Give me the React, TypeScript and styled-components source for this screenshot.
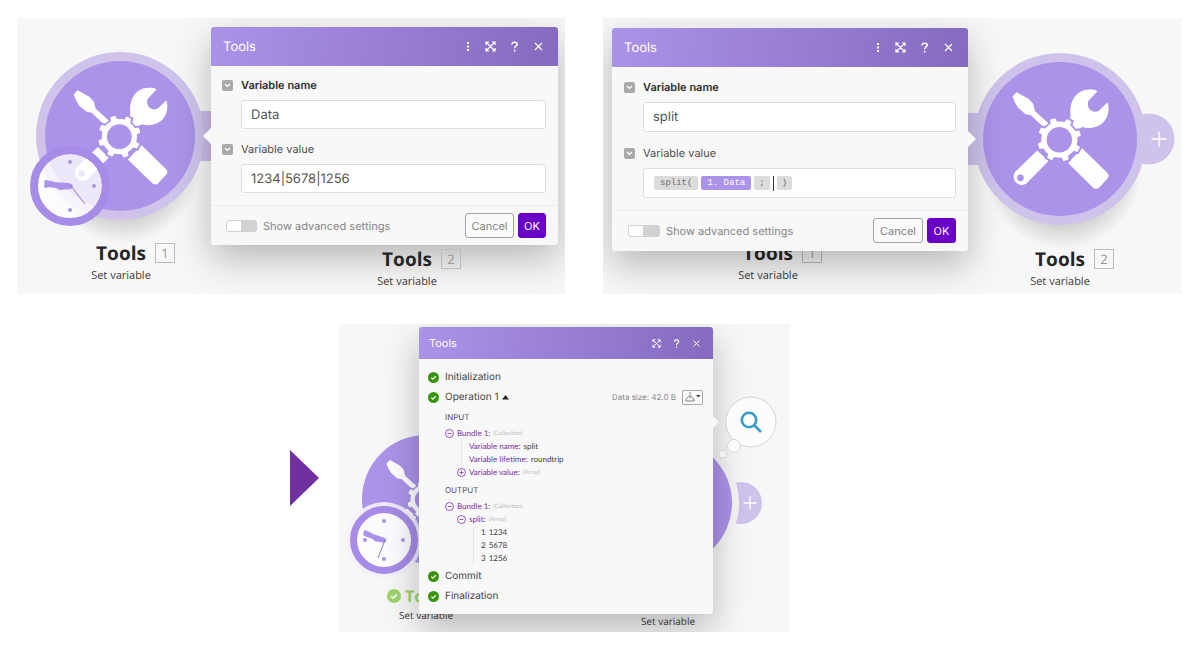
import React, { useId } from "react";
import styled, { createGlobalStyle, css } from "styled-components";

const ui = `Inter, "Liberation Sans", sans-serif`;
const segoe = `"Open Sans", "Noto Sans", sans-serif`;
const violet = "#ab93e9";

const GlobalStyle = createGlobalStyle`
  * { box-sizing: border-box; }
  body { margin: 0; background: #fff; font-family: ${ui}; color: #4a4a4a; text-rendering: geometricPrecision; }
  button, input { font: inherit; color: inherit; margin: 0; text-rendering: inherit; }
  svg { display: block; }
`;

/* ---------- page ---------- */

const Page = styled.main`
  display: flex;
  flex-direction: column;
  gap: 30px;
  padding: 18px 18px 14px 17px;
`;

const TopRow = styled.div`
  display: flex;
  gap: 38px;
`;

const BottomRow = styled.div`
  display: flex;
  align-items: center;
  gap: 20px;
  padding-left: 273px;
`;

const Scene = styled.section<{ $grow?: number; $basis?: number; $height: number }>`
  position: relative;
  overflow: hidden;
  flex: ${(p) => (p.$grow ? `${p.$grow} 1 0` : `0 1 ${p.$basis}px`)};
  min-width: 0;
  min-height: ${(p) => p.$height}px;
  background: #f7f7f7;
`;

/* ---------- modules on the canvas ---------- */

const Art = styled.svg<{ $x: number; $y: number }>`
  position: absolute;
  left: ${(p) => p.$x}px;
  top: ${(p) => p.$y}px;
  width: 1px;
  height: 1px;
  overflow: visible;
`;

const Caption = styled.div<{ $x: number; $y: number; $small?: boolean }>`
  position: absolute;
  left: ${(p) => p.$x - 70}px;
  top: ${(p) => p.$y}px;
  width: 140px;
  display: grid;
  grid-template-columns: 1fr auto 1fr;
  align-items: center;
  column-gap: ${(p) => (p.$small ? 4 : 9)}px;
  row-gap: ${(p) => (p.$small ? 2 : 4)}px;
  font-family: ${segoe};
`;

const CaptionTitle = styled.strong<{ $small?: boolean; $done?: boolean }>`
  grid-column: 2;
  font-size: ${(p) => (p.$small ? 16 : 19)}px;
  line-height: ${(p) => (p.$small ? 18 : 22)}px;
  color: ${(p) => (p.$done ? "#9dd36b" : "#252525")};
`;

const CaptionNumber = styled.span<{ $small?: boolean }>`
  justify-self: start;
  width: 20px;
  height: ${(p) => (p.$small ? 18 : 20)}px;
  border: 1px solid #bcbcbc;
  color: #999;
  font-size: ${(p) => (p.$small ? 11 : 13)}px;
  line-height: 18px;
  text-align: center;
`;

const CaptionText = styled.span<{ $small?: boolean }>`
  grid-column: 1 / -1;
  font-size: ${(p) => (p.$small ? 10 : 11)}px;
  line-height: 16px;
  color: #3a3a3a;
  text-align: center;
`;

const CaptionMark = styled.span`
  grid-column: 1;
  justify-self: end;
`;

function ToolsGlyph({ radius, back = violet }: { radius: number; back?: string }) {
  const teeth = [0, 1, 2, 3, 4, 5, 6, 7].map((k) => -108 + 45 * k + 90);
  return (
    <g transform={`scale(${radius / 230})`} fill="#fff">
      <path d="M-130-140-142-127Q-136-108-125-93L-104-75-87-71-46-32-32-45-75-84-80-105-94-120Z" />
      <path d="M22-46 32-70C26-110 48-148 88-148 98-148 106-147 112-143L84-113Q80-95 93-85 104-78 117-85L142-110C150-88 144-52 112-38Q90-29 66-36L46-22Z" />
      <path d="M-68 34-134 98A25 25 0 0 0-101 134L-34 66Z" />
      <path d="M66 28 141 101Q149 109 142 118L117 145Q109 152 100 146L24 72Z" />
      <circle cx="-118" cy="116" r="10" fill={back} />
      <g transform="translate(-2 2)">
        <circle r="54" fill={back} stroke={back} strokeWidth="10" />
        {teeth.map((a) => (
          <path key={a} d="M-11-48-8-65H8L11-48Z" transform={`rotate(${a})`} stroke={back} strokeWidth="12" />
        ))}
        <circle r="54" />
        {teeth.map((a) => (
          <path key={a} d="M-11-48-8-65H8L11-48Z" transform={`rotate(${a})`} />
        ))}
        <circle r="38" fill={back} />
      </g>
    </g>
  );
}

function GroundShadow({ radius }: { radius: number }) {
  const id = useId();
  return (
    <>
      <radialGradient id={id}>
        <stop offset="0.6" stopColor="#000" stopOpacity="0.2" />
        <stop offset="1" stopColor="#000" stopOpacity="0" />
      </radialGradient>
      <circle cx="3" cy={radius * 0.36} r={radius * 0.92} fill={`url(#${id})`} />
    </>
  );
}

interface ClockProps {
  x: number;
  y: number;
  r: number;
  ring: number;
  tilt?: number;
  thin: [number, number];
}

function Clock({ x, y, r, ring, tilt = 0, thin }: ClockProps) {
  const d = r - 8;
  return (
    <g transform={`translate(${x} ${y})`}>
      <circle r={r} fill="#fff" fillOpacity="0.78" />
      <circle r={r + ring / 2} fill="none" stroke="#a68ce6" strokeWidth={ring} />
      <g fill={violet}>
        <circle cy={-d} r="2" />
        <circle cx={d} r="2" />
        <circle cy={d} r="2" />
        <circle cx={-d} r="2" />
        <path
          d="M2-2Q4 1 1 3L-10 4-14 2-24 1Q-27-2-25-6L-18-5-16-4-2-3Z"
          transform={`rotate(${tilt}) scale(${r / 32})`}
        />
      </g>
      <path d={`M1 0L${thin[0]} ${thin[1]}`} stroke="#8d78c8" strokeWidth="1" fill="none" />
    </g>
  );
}

function Plus({ x, size }: { x: number; size: number }) {
  const h = size / 2;
  return <path d={`M${x - h} 0H${x + h}M${x} ${-h}V${h}`} stroke="#fff" strokeWidth="1.4" fill="none" />;
}

function CheckDisc({ size, color }: { size: number; color: string }) {
  return (
    <svg width={size} height={size} viewBox="0 0 12 12" aria-hidden="true">
      <circle cx="6" cy="6" r="6" fill={color} />
      <path d="M3.6 6.2 5.3 7.8 8.5 4.6" fill="none" stroke="#fff" strokeWidth="1.3" />
    </svg>
  );
}

/* ---------- dialog ---------- */

const Panel = styled.div<{ $x: number; $y: number; $width: number }>`
  position: absolute;
  left: ${(p) => p.$x}px;
  top: ${(p) => p.$y}px;
  width: ${(p) => p.$width}px;
  background: #f8f8f8;
  border-radius: 3px;
  box-shadow: 0 14px 36px rgba(0, 0, 0, 0.26);
`;

const Pointer = styled.span<{ $side: "left" | "right"; $top: number; $size: number }>`
  position: absolute;
  top: ${(p) => p.$top - p.$size}px;
  border: ${(p) => p.$size}px solid transparent;
  ${(p) =>
    p.$side === "left"
      ? css`
          right: 100%;
          border-left-width: 0;
          border-right-color: #f8f8f8;
        `
      : css`
          left: 100%;
          border-right-width: 0;
          border-left-color: #f8f8f8;
        `}
`;

const PanelHeader = styled.header<{ $height: number; $small?: boolean }>`
  display: flex;
  align-items: center;
  gap: ${(p) => (p.$small ? 8 : 12)}px;
  height: ${(p) => p.$height}px;
  padding: 0 ${(p) => (p.$small ? 11 : 14)}px 0 ${(p) => (p.$small ? 10 : 12)}px;
  border-radius: 3px 3px 0 0;
  background: linear-gradient(100deg, #ab93ea 0%, #856abf 100%);
  color: #fff;
`;

const PanelTitle = styled.h2<{ $small?: boolean }>`
  flex: 1;
  margin: 0;
  font-size: ${(p) => (p.$small ? 11 : 13)}px;
  font-weight: 400;
`;

const HeaderButton = styled.button<{ $narrow?: boolean }>`
  display: grid;
  place-items: center;
  width: ${(p) => (p.$narrow ? 8 : 12)}px;
  height: 14px;
  padding: 0;
  border: 0;
  background: none;
`;

function HeaderButtons({ small }: { small?: boolean }) {
  const s = small ? 9 : 11;
  return (
    <>
      {!small && (
        <HeaderButton aria-label="More options" $narrow>
          <svg width="4" height="11" viewBox="0 0 4 11" fill="#fff">
            <rect x="1" y="1" width="2" height="2" />
            <rect x="1" y="4.5" width="2" height="2" />
            <rect x="1" y="8" width="2" height="2" />
          </svg>
        </HeaderButton>
      )}
      <HeaderButton aria-label="Expand">
        <svg width={s} height={s} viewBox="0 0 11 11" fill="none" stroke="#fff" strokeWidth="1.2">
          <path d="M1 1 10 10M10 1 1 10M1 4V1H4M7 1H10V4M10 7V10H7M4 10H1V7" />
        </svg>
      </HeaderButton>
      <HeaderButton aria-label="Help">
        <svg width={s} height={s} viewBox="0 0 11 11" fill="none" stroke="#fff" strokeWidth="1.5">
          <path d="M3 3.4C3 .4 8.2.5 8.2 3.3 8.2 5 5.6 5 5.6 7.3M5.6 8.8V10.4" />
        </svg>
      </HeaderButton>
      <HeaderButton aria-label="Close">
        <svg width={s} height={s} viewBox="0 0 11 11" fill="none" stroke="#fff" strokeWidth="1.2">
          <path d="M2 2 9 9M9 2 2 9" />
        </svg>
      </HeaderButton>
    </>
  );
}

const Fields = styled.div<{ $roomy?: boolean }>`
  display: flex;
  flex-direction: column;
  gap: ${(p) => (p.$roomy ? 14 : 13)}px;
  padding: ${(p) => (p.$roomy ? "13px 12px 12px" : "12px 12px 12px 11px")};
`;

const FieldRow = styled.div`
  display: grid;
  grid-template-columns: 11px 1fr;
  gap: 7px 8px;
  align-items: center;
`;

const Collapse = styled.button`
  display: grid;
  place-items: center;
  width: 11px;
  height: 11px;
  padding: 0;
  border: 0;
  border-radius: 2px;
  background: #a9a9a9;
`;

const FieldLabel = styled.label<{ $bold?: boolean }>`
  font-size: 11px;
  line-height: 15px;
  font-weight: ${(p) => (p.$bold ? 600 : 400)};
  color: ${(p) => (p.$bold ? "#2c2c2c" : "#4d4d4d")};
`;

const box = css<{ $roomy?: boolean }>`
  grid-column: 2;
  width: 100%;
  height: ${(p) => (p.$roomy ? 30 : 29)}px;
  border: 1px solid #dfdfdf;
  border-radius: 3px;
  background: #fff;
`;

const TextBox = styled.input<{ $roomy?: boolean }>`
  ${box}
  padding: 0 9px;
  font-size: 13px;
  color: #555;
  outline: 0;
`;

const ExpressionBox = styled.div<{ $roomy?: boolean }>`
  ${box}
  display: flex;
  align-items: center;
  gap: 3px;
  padding: 0 10px;
`;

const Token = styled.span<{ $value?: boolean; $mark?: boolean }>`
  padding: 0 ${(p) => (p.$mark ? 5 : 6)}px;
  border-radius: 2px;
  background: ${(p) => (p.$value ? violet : "#dcdcdc")};
  color: ${(p) => (p.$value ? "#fff" : "#6c6c6c")};
  font-family: "Liberation Mono", monospace;
  font-size: 9px;
  line-height: 14px;
`;

const Caret = styled.span`
  width: 1px;
  height: 15px;
  background: #333;
`;

const FormFooter = styled.footer<{ $roomy?: boolean }>`
  display: flex;
  align-items: center;
  gap: 4px;
  padding: ${(p) => (p.$roomy ? "7px 12px 8px 16px" : "7px 12px 7px 15px")};
  border-top: 1px solid #eeeeee;
`;

const Advanced = styled.label`
  display: flex;
  align-items: center;
  gap: 6px;
  flex: 1;
  font-size: 11px;
  color: #858585;
`;

const Switch = styled.input<{ $roomy?: boolean }>`
  appearance: none;
  width: ${(p) => (p.$roomy ? 32 : 31)}px;
  height: 12px;
  border: 1px solid #d0d0d0;
  border-radius: 3px;
  background: linear-gradient(90deg, #fff 14px, #d2d2d2 14px);
`;

const ActionButton = styled.button<{ $primary?: boolean; $roomy?: boolean }>`
  min-width: ${(p) => (p.$primary ? 28 : 49) + (p.$roomy ? 1 : 0)}px;
  height: 25px;
  padding: 0 5px;
  border: 1px solid ${(p) => (p.$primary ? "#6a00c8" : "#a0a4ad")};
  border-radius: 3px;
  background: ${(p) => (p.$primary ? "#6a00c8" : "#fafafa")};
  color: ${(p) => (p.$primary ? "#fff" : "#808080")};
  font-size: 11px;
`;

function Field({ id, label, bold, children }: { id: string; label: string; bold?: boolean; children: React.ReactNode }) {
  return (
    <FieldRow>
      <Collapse type="button" aria-label={`Collapse ${label}`}>
        <svg width="7" height="5" viewBox="0 0 7 5" fill="none" stroke="#fff" strokeWidth="1.4">
          <path d="M1 1 3.5 3.4 6 1" />
        </svg>
      </Collapse>
      <FieldLabel id={`${id}-label`} htmlFor={id} $bold={bold}>
        {label}
      </FieldLabel>
      {children}
    </FieldRow>
  );
}

function Footer({ roomy }: { roomy?: boolean }) {
  return (
    <FormFooter $roomy={roomy}>
      <Advanced>
        <Switch type="checkbox" role="switch" $roomy={roomy} />
        Show advanced settings
      </Advanced>
      <ActionButton type="button" $roomy={roomy}>
        Cancel
      </ActionButton>
      <ActionButton type="button" $primary $roomy={roomy}>
        OK
      </ActionButton>
    </FormFooter>
  );
}

/* ---------- run log ---------- */

const Log = styled.div`
  display: flex;
  flex-direction: column;
  padding: 8px 10px 8px 9px;
`;

const Step = styled.div`
  display: flex;
  align-items: center;
  gap: 6px;
  height: 20px;
  font-size: 10px;
  color: #454545;
`;

const StepToggle = styled.button`
  display: flex;
  align-items: center;
  gap: 4px;
  flex: 1;
  padding: 0;
  border: 0;
  background: none;
  color: #454545;
`;

const DataSize = styled.span`
  font-size: 8px;
  color: #858585;
`;

const DownloadButton = styled.button`
  display: grid;
  place-items: center;
  width: 21px;
  height: 15px;
  padding: 0;
  border: 1px solid #a8a8a8;
  border-radius: 2px;
  background: #fafafa;
`;

const LogHeading = styled.h3`
  margin: 3px 0 3px 17px;
  font-size: 8px;
  line-height: 14px;
  font-weight: 400;
  color: #505050;
`;

const TreeList = styled.ul<{ $root?: boolean }>`
  margin: 0 0 0 ${(p) => (p.$root ? 17 : 12)}px;
  padding: 0 0 ${(p) => (p.$root ? 1 : 0)}px;
  list-style: none;
  font-family: Lato, "Open Sans", sans-serif;
  font-size: 8px;
  line-height: 13px;
  color: #3f3f3f;
`;

const TreeRow = styled.div<{ $leaf?: boolean }>`
  display: flex;
  align-items: center;
  gap: 3px;
  ${(p) =>
    p.$leaf &&
    css`
      margin-left: 4px;
      padding-left: 7px;
      border-left: 1px solid #e6e6e6;
    `}
`;

const Key = styled.span`
  color: #7a2fa0;
  white-space: nowrap;
`;

const Kind = styled.span`
  font-size: 6px;
  color: #bdbdbd;
`;

const Fold = styled.button`
  width: 9px;
  height: 9px;
  padding: 0;
  border: 0;
  background: none;
`;

function FoldButton({ open }: { open?: boolean }) {
  return (
    <Fold aria-label={open ? "Collapse" : "Expand"}>
      <svg width="9" height="9" viewBox="0 0 9 9" fill="none" stroke="#8a44b0" strokeWidth="0.9">
        <circle cx="4.5" cy="4.5" r="4" />
        <path d={open ? "M2.5 4.5H6.5" : "M2.5 4.5H6.5M4.5 2.5V6.5"} />
      </svg>
    </Fold>
  );
}

const Green = () => <CheckDisc size={11} color="#38930f" />;

/* ---------- scenes ---------- */

function FirstVariable() {
  return (
    <Scene $grow={548} $height={276}>
      <Art $x={103} $y={118}>
        <GroundShadow radius={84} />
        <path d="M60-25H100V25H60Z" fill="#cabce9" />
        <circle r="84" fill="#cfc3ec" />
        <circle r="75" fill={violet} />
        <ToolsGlyph radius={75} />
        <Clock x={-50} y={50} r={32} ring={8} thin={[15, 18]} />
      </Art>
      <Caption $x={104} $y={224}>
        <CaptionTitle>Tools</CaptionTitle>
        <CaptionNumber>1</CaptionNumber>
        <CaptionText>Set variable</CaptionText>
      </Caption>
      <Panel $x={194} $y={9} $width={347}>
        <Pointer $side="left" $top={109} $size={8} />
        <PanelHeader $height={39}>
          <PanelTitle>Tools</PanelTitle>
          <HeaderButtons />
        </PanelHeader>
        <form>
          <Fields>
            <Field id="first-name" label="Variable name" bold>
              <TextBox id="first-name" defaultValue="Data" />
            </Field>
            <Field id="first-value" label="Variable value">
              <TextBox id="first-value" defaultValue="1234|5678|1256" />
            </Field>
          </Fields>
          <Footer />
        </form>
      </Panel>
      <Caption $x={390} $y={230}>
        <CaptionTitle>Tools</CaptionTitle>
        <CaptionNumber>2</CaptionNumber>
        <CaptionText>Set variable</CaptionText>
      </Caption>
    </Scene>
  );
}

function SplitVariable() {
  return (
    <Scene $grow={579} $height={276}>
      <Caption $x={165} $y={224}>
        <CaptionTitle>Tools</CaptionTitle>
        <CaptionNumber>1</CaptionNumber>
        <CaptionText>Set variable</CaptionText>
      </Caption>
      <Art $x={457} $y={121}>
        <GroundShadow radius={86} />
        <path d="M-110-26H-60V26H-110Z" fill="#cfc3ec" />
        <circle cx="89" r="25.5" fill="#cfc3ec" />
        <circle r="86" fill="#cfc3ec" />
        <circle r="77" fill={violet} />
        <ToolsGlyph radius={77} />
        <Plus x={99} size={15} />
      </Art>
      <Caption $x={457} $y={230}>
        <CaptionTitle>Tools</CaptionTitle>
        <CaptionNumber>2</CaptionNumber>
        <CaptionText>Set variable</CaptionText>
      </Caption>
      <Panel $x={9} $y={10} $width={356}>
        <Pointer $side="right" $top={111} $size={8} />
        <PanelHeader $height={39}>
          <PanelTitle>Tools</PanelTitle>
          <HeaderButtons />
        </PanelHeader>
        <form>
          <Fields $roomy>
            <Field id="split-name" label="Variable name" bold>
              <TextBox id="split-name" defaultValue="split" $roomy />
            </Field>
            <Field id="split-value" label="Variable value">
              <ExpressionBox id="split-value" role="textbox" aria-labelledby="split-value-label" $roomy>
                <Token>split(</Token>
                <Token $value>1. Data</Token>
                <Token $mark>;</Token>
                <Caret />
                <Token $mark>)</Token>
              </ExpressionBox>
            </Field>
          </Fields>
          <Footer roomy />
        </form>
      </Panel>
    </Scene>
  );
}

function RunResult() {
  return (
    <Scene $basis={451} $height={308}>
      <Art $x={87} $y={175}>
        <circle r="64" fill={violet} />
        <ToolsGlyph radius={64} />
        <circle cx="-42" cy="41" r="38" fill="#f4f1fb" fillOpacity="0.9" />
        <Clock x={-42} y={41} r={27} ring={7} tilt={14} thin={[-6, 18]} />
      </Art>
      <Art $x={329} $y={179}>
        <circle cx="73" r="21" fill="#cfc3ec" />
        <circle r="71" fill="#f5f5f5" />
        <circle r="64" fill={violet} />
        <Plus x={82} size={13} />
      </Art>
      <Caption $x={87} $y={263} $small>
        <CaptionMark>
          <CheckDisc size={14} color="#9dd36b" />
        </CaptionMark>
        <CaptionTitle $small $done>
          Tools
        </CaptionTitle>
        <CaptionText $small>Set variable</CaptionText>
      </Caption>
      <Caption $x={329} $y={269} $small>
        <CaptionTitle $small>Tools</CaptionTitle>
        <CaptionNumber $small>2</CaptionNumber>
        <CaptionText $small>Set variable</CaptionText>
      </Caption>
      <Panel $x={80} $y={3} $width={294}>
        <Pointer $side="right" $top={95} $size={6} />
        <PanelHeader $height={32} $small>
          <PanelTitle $small>Tools</PanelTitle>
          <HeaderButtons small />
        </PanelHeader>
        <Log>
          <Step>
            <Green />
            Initialization
          </Step>
          <Step>
            <Green />
            <StepToggle>
              Operation 1
              <svg width="7" height="5" viewBox="0 0 7 5">
                <path d="M0 4.5 3.5 0 7 4.5Z" fill="#222" />
              </svg>
            </StepToggle>
            <DataSize>Data size: 42.0 B</DataSize>
            <DownloadButton aria-label="Download">
              <svg width="16" height="10" viewBox="0 0 16 10" fill="none" stroke="#777" strokeWidth="0.9">
                <path d="M5 0V5.5M3 3.8 5 5.8 7 3.8M3 5.4 1 7V9H9V7L7 5.4" />
                <path d="M11 3H15.6L13.3 5.4Z" fill="#444" stroke="none" />
              </svg>
            </DownloadButton>
          </Step>
          <LogHeading>INPUT</LogHeading>
          <TreeList $root>
            <li>
              <TreeRow>
                <FoldButton open />
                <Key>Bundle 1:</Key>
                <Kind>(Collection)</Kind>
              </TreeRow>
              <TreeList>
                <li>
                  <TreeRow $leaf>
                    <Key>Variable name:</Key> split
                  </TreeRow>
                </li>
                <li>
                  <TreeRow $leaf>
                    <Key>Variable lifetime:</Key> roundtrip
                  </TreeRow>
                </li>
                <li>
                  <TreeRow>
                    <FoldButton />
                    <Key>Variable value:</Key>
                    <Kind>(Array)</Kind>
                  </TreeRow>
                </li>
              </TreeList>
            </li>
          </TreeList>
          <LogHeading>OUTPUT</LogHeading>
          <TreeList $root>
            <li>
              <TreeRow>
                <FoldButton open />
                <Key>Bundle 1:</Key>
                <Kind>(Collection)</Kind>
              </TreeRow>
              <TreeList>
                <li>
                  <TreeRow>
                    <FoldButton open />
                    <Key>split:</Key>
                    <Kind>(Array)</Kind>
                  </TreeRow>
                  <TreeList>
                    <li>
                      <TreeRow $leaf>
                        1 <span>1234</span>
                      </TreeRow>
                    </li>
                    <li>
                      <TreeRow $leaf>
                        2 <span>5678</span>
                      </TreeRow>
                    </li>
                    <li>
                      <TreeRow $leaf>
                        3 <span>1256</span>
                      </TreeRow>
                    </li>
                  </TreeList>
                </li>
              </TreeList>
            </li>
          </TreeList>
          <Step>
            <Green />
            Commit
          </Step>
          <Step>
            <Green />
            Finalization
          </Step>
        </Log>
      </Panel>
      <Art $x={412} $y={98}>
        <g stroke="#d4d4d4" fill="#fcfcfc">
          <circle r="25" />
          <circle cx="-17" cy="24" r="6.5" />
          <circle cx="-28" cy="32" r="4" fill="#f2f2f2" />
        </g>
        <g fill="none" stroke="#3b9ccc" strokeWidth="2.6">
          <circle cx="-2" cy="-2" r="7.2" />
          <path d="M3 3 10 10" />
        </g>
      </Art>
    </Scene>
  );
}

export default function App() {
  return (
    <>
      <GlobalStyle />
      <Page>
        <TopRow>
          <FirstVariable />
          <SplitVariable />
        </TopRow>
        <BottomRow>
          <svg width="29" height="56" viewBox="0 0 29 56" aria-hidden="true">
            <path d="M0 0 29 28 0 56Z" fill="#7030a0" />
          </svg>
          <RunResult />
        </BottomRow>
      </Page>
    </>
  );
}
